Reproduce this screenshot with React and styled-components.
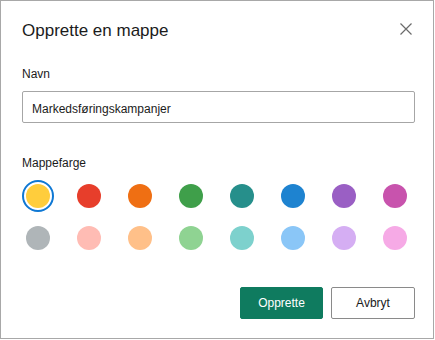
import React, { useState } from "react";
import styled, { createGlobalStyle } from "styled-components";

const GlobalStyle = createGlobalStyle`
  * { box-sizing: border-box; }
  body {
    margin: 0;
    background: #fff;
    font-family: "Liberation Sans", Arial, sans-serif;
  }
`;

const Dialog = styled.div`
  width: 434px;
  height: 339px;
  border: 1px solid #a8a8a8;
  background: #fff;
  padding: 20px 18px 0 21px;
  display: flex;
  flex-direction: column;
`;

const Header = styled.div`
  display: flex;
  align-items: flex-start;
  justify-content: space-between;
`;

const Title = styled.h1`
  margin: 0;
  font-size: 17px;
  line-height: 20px;
  font-weight: 400;
  color: #1b1b1b;
`;

const CloseButton = styled.button`
  border: 0;
  background: none;
  padding: 0;
  margin: 1px 2px 0 0;
  width: 14px;
  height: 14px;
  display: flex;
  align-items: center;
  justify-content: center;
  cursor: pointer;
`;

const Label = styled.div`
  font-size: 12px;
  line-height: 16px;
  color: #1b1b1b;
  margin-top: ${(p) => p.$top}px;
`;

const TextInput = styled.input`
  margin-top: 9px;
  width: 100%;
  height: 32px;
  border: 1px solid #a6a6a6;
  border-radius: 2px;
  padding: 3px 9px 0;
  font-family: "Liberation Sans", Arial, sans-serif;
  font-size: 12px;
  color: #1b1b1b;
  outline: none;
`;

const Swatches = styled.div`
  margin-top: 9px;
  display: grid;
  grid-template-columns: repeat(8, 32px);
  column-gap: 19px;
  row-gap: 10px;
`;

const Swatch = styled.button`
  width: 32px;
  height: 32px;
  padding: 0;
  border-radius: 50%;
  border: 2px solid ${(p) => (p.$selected ? "#0f78d4" : "transparent")};
  background: #fff;
  display: flex;
  align-items: center;
  justify-content: center;
  cursor: pointer;

  &::after {
    content: "";
    width: 24px;
    height: 24px;
    border-radius: 50%;
    background: ${(p) => p.$color};
  }
`;

const Footer = styled.div`
  margin-top: 33px;
  display: flex;
  justify-content: flex-end;
  gap: 8px;
`;

const Button = styled.button`
  width: ${(p) => p.$width}px;
  height: 32px;
  border-radius: 2px;
  font-family: "Liberation Sans", Arial, sans-serif;
  font-size: 12px;
  padding: 0;
  cursor: pointer;
  border: 1px solid ${(p) => (p.$primary ? "#0f7b5f" : "#8a8a8a")};
  background: ${(p) => (p.$primary ? "#0f7b5f" : "#fff")};
  color: ${(p) => (p.$primary ? "#fff" : "#1b1b1b")};
`;

const colors = [
  "#ffcd3c", "#e73e2b", "#ef6f13", "#3f9f4a", "#268f8b", "#1e83d0", "#9a5fc4", "#c853ad",
  "#afb5b8", "#ffbcb4", "#ffc089", "#8fd392", "#7dd1cd", "#8ac6f7", "#d5aef3", "#f6aae6",
];

export default function App() {
  const [selected, setSelected] = useState(0);
  return (
    <>
      <GlobalStyle />
      <Dialog>
        <Header>
          <Title>Opprette en mappe</Title>
          <CloseButton aria-label="Lukk">
            <svg width="12" height="12" viewBox="0 0 12 12">
              <path d="M0.5 0.5 L11.5 11.5 M11.5 0.5 L0.5 11.5" stroke="#6b6b6b" strokeWidth="1.2" />
            </svg>
          </CloseButton>
        </Header>
        <Label $top={25}>Navn</Label>
        <TextInput defaultValue="Markedsføringskampanjer" />
        <Label $top={32}>Mappefarge</Label>
        <Swatches>
          {colors.map((c, i) => (
            <Swatch key={c} $color={c} $selected={i === selected} onClick={() => setSelected(i)} />
          ))}
        </Swatches>
        <Footer>
          <Button $primary $width={83}>Opprette</Button>
          <Button $width={84}>Avbryt</Button>
        </Footer>
      </Dialog>
    </>
  );
}
